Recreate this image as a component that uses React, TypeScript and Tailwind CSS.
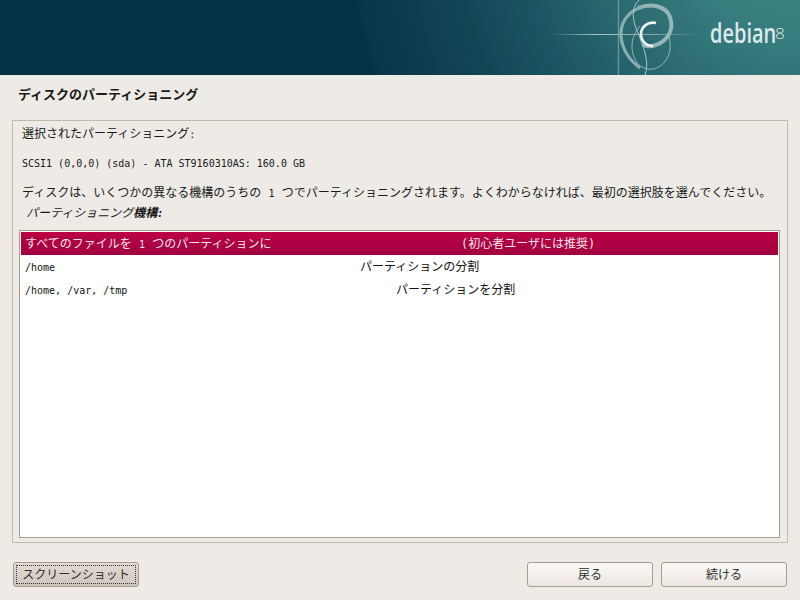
function L({ children }: { children: React.ReactNode }) {
  return <span className="text-[10px] font-['DejaVu_Sans_Mono',monospace]">{children}</span>;
}

function Banner() {
  return (
    <div className="relative h-[75px] w-full overflow-hidden bg-[radial-gradient(circle_at_800px_-70px,#3f8a86_0px,#35797c_130px,#2a686f_200px,#1d5764_270px,#144656_340px,#0d3c4e_400px,#0a364a_445px,#033245_450px)]">
      <svg className="absolute left-0 top-0" width="800" height="75" viewBox="0 0 800 75" fill="none">
        <defs>
          <linearGradient id="hl" x1="550" x2="700" y1="0" y2="0" gradientUnits="userSpaceOnUse">
            <stop offset="0" stopColor="#d5e3e1" stopOpacity="0" />
            <stop offset="0.3" stopColor="#d5e3e1" stopOpacity="0.75" />
            <stop offset="0.7" stopColor="#d5e3e1" stopOpacity="0.5" />
            <stop offset="1" stopColor="#d5e3e1" stopOpacity="0" />
          </linearGradient>
        </defs>
        <path d="M618.5 0V75" stroke="#a9c6c6" strokeOpacity="0.5" strokeWidth="1.4" />
        <path d="M550 34.5H700" stroke="url(#hl)" strokeWidth="1.2" />
        <path d="M638 8C652 3 666 6 670 17C674 29 669 40 656 45C650 47 646 47 643 44" stroke="#94b6b7" strokeWidth="4" />
        <path d="M642 7C628 11 620 23 621 36C622 48 628 59 640 68" stroke="#88aeb0" strokeWidth="3.2" />
        <path d="M656 23C648 21 641 27 641 34C641 41 646 46 653 46" stroke="#eef3f1" strokeWidth="2.6" />
        <path d="M639 0C631 8 632 20 638 33C643 46 650 62 645 75" stroke="#b7d0cf" strokeWidth="0.9" />
        <path d="M640 26C630 37 629 54 639 65C650 74 664 68 669 54C671 47 670 41 669 37" stroke="#9dbdbe" strokeWidth="0.9" />
      </svg>
      <div className="absolute left-[710px] top-[16px] origin-left scale-x-[0.74] font-['Open_Sans',sans-serif] text-[27px] font-semibold leading-[34px] text-[#dce9ea]">
        debian
      </div>
      <div className="absolute left-[775px] top-[23px] origin-left scale-x-[1.15] font-['Open_Sans',sans-serif] text-[15px] font-light leading-[20px] text-[#d7e5e6]">
        8
      </div>
    </div>
  );
}

function Row({ first, w, second, selected }: { first: React.ReactNode; w: string; second: string; selected?: boolean }) {
  return (
    <div
      className={
        "flex h-[23px] items-center pl-[4px] " +
        (selected ? "bg-gradient-to-b from-[#bb0044] to-[#a00040] text-[#f3e6ea]" : "text-[#111111]")
      }
    >
      <span className={w}>{first}</span>
      <span>{second}</span>
    </div>
  );
}

function Btn({ children, focus, w }: { children: React.ReactNode; focus?: boolean; w: string }) {
  return (
    <button
      className={
        "flex h-[25px] items-center justify-center rounded-[3px] border border-[#a89c8d] text-[12px] text-[#2e2e2e] " +
        w +
        (focus ? " bg-gradient-to-b from-[#e2dcd5] to-[#cfc6bc]" : " bg-gradient-to-b from-[#fbf9f8] to-[#ebe6e1]")
      }
    >
      {focus ? (
        <span className="flex h-[19px] w-[120px] items-center justify-center border border-dotted border-[#333]">{children}</span>
      ) : (
        children
      )}
    </button>
  );
}

export default function App() {
  return (
    <div
      className="flex h-[600px] w-[800px] flex-col overflow-hidden bg-[#eeebe7] text-[12px] text-[#1a1a1a]"
      style={{ fontFamily: '"DejaVu Sans Mono", "Noto Sans CJK JP", monospace' }}
    >
      <Banner />
      <h1 className="h-[45px] pl-[18px] pt-[11px] text-[13px] font-bold leading-[17px] text-[#1a1a1a]">
        ディスクのパーティショニング
      </h1>
      <div className="ml-[12px] mr-[12px] flex h-[423px] flex-col border border-[#c4b8a8] pb-[4px] pl-[6px] pr-[7px]">
        <p className="ml-[3px] mt-[5px] h-[17px] leading-[17px]">
          選択されたパーティショニング<L>:</L>
        </p>
        <p className="ml-[3px] mt-[12px] h-[17px] leading-[17px]">
          <L>SCSI1 (0,0,0) (sda) - ATA ST9160310AS: 160.0 GB</L>
        </p>
        <p className="ml-[3px] mt-[13px] h-[17px] whitespace-nowrap leading-[17px]">
          ディスクは、いくつかの異なる機構のうちの <L>1</L> つでパーティショニングされます。よくわからなければ、最初の選択肢を選んでください。
        </p>
        <p className="ml-[7px] mt-[2px] h-[18px] text-[12px] font-normal italic leading-[18px]">
          パーティショニング<span className="font-bold">機構</span>
          <span className="font-bold">
            <L>:</L>
          </span>
        </p>
        <div className="mt-[8px] flex-1 border border-[#a89c8d] bg-white p-px">
          <Row
            selected
            w="w-[436px]"
            first={
              <>
                すべてのファイルを <L>1</L> つのパーティションに
              </>
            }
            second="(初心者ユーザには推奨)"
          />
          <Row w="w-[335px]" first={<L>/home</L>} second="パーティションの分割" />
          <Row w="w-[371px]" first={<L>/home, /var, /tmp</L>} second="パーティションを分割" />
        </div>
      </div>
      <div className="mt-[19px] flex items-center pl-[13px] pr-[13px]">
        <Btn focus w="w-[126px]">
          スクリーンショット
        </Btn>
        <div className="flex-1" />
        <Btn w="w-[126px]">戻る</Btn>
        <Btn w="ml-[8px] w-[126px]">続ける</Btn>
      </div>
    </div>
  );
}
